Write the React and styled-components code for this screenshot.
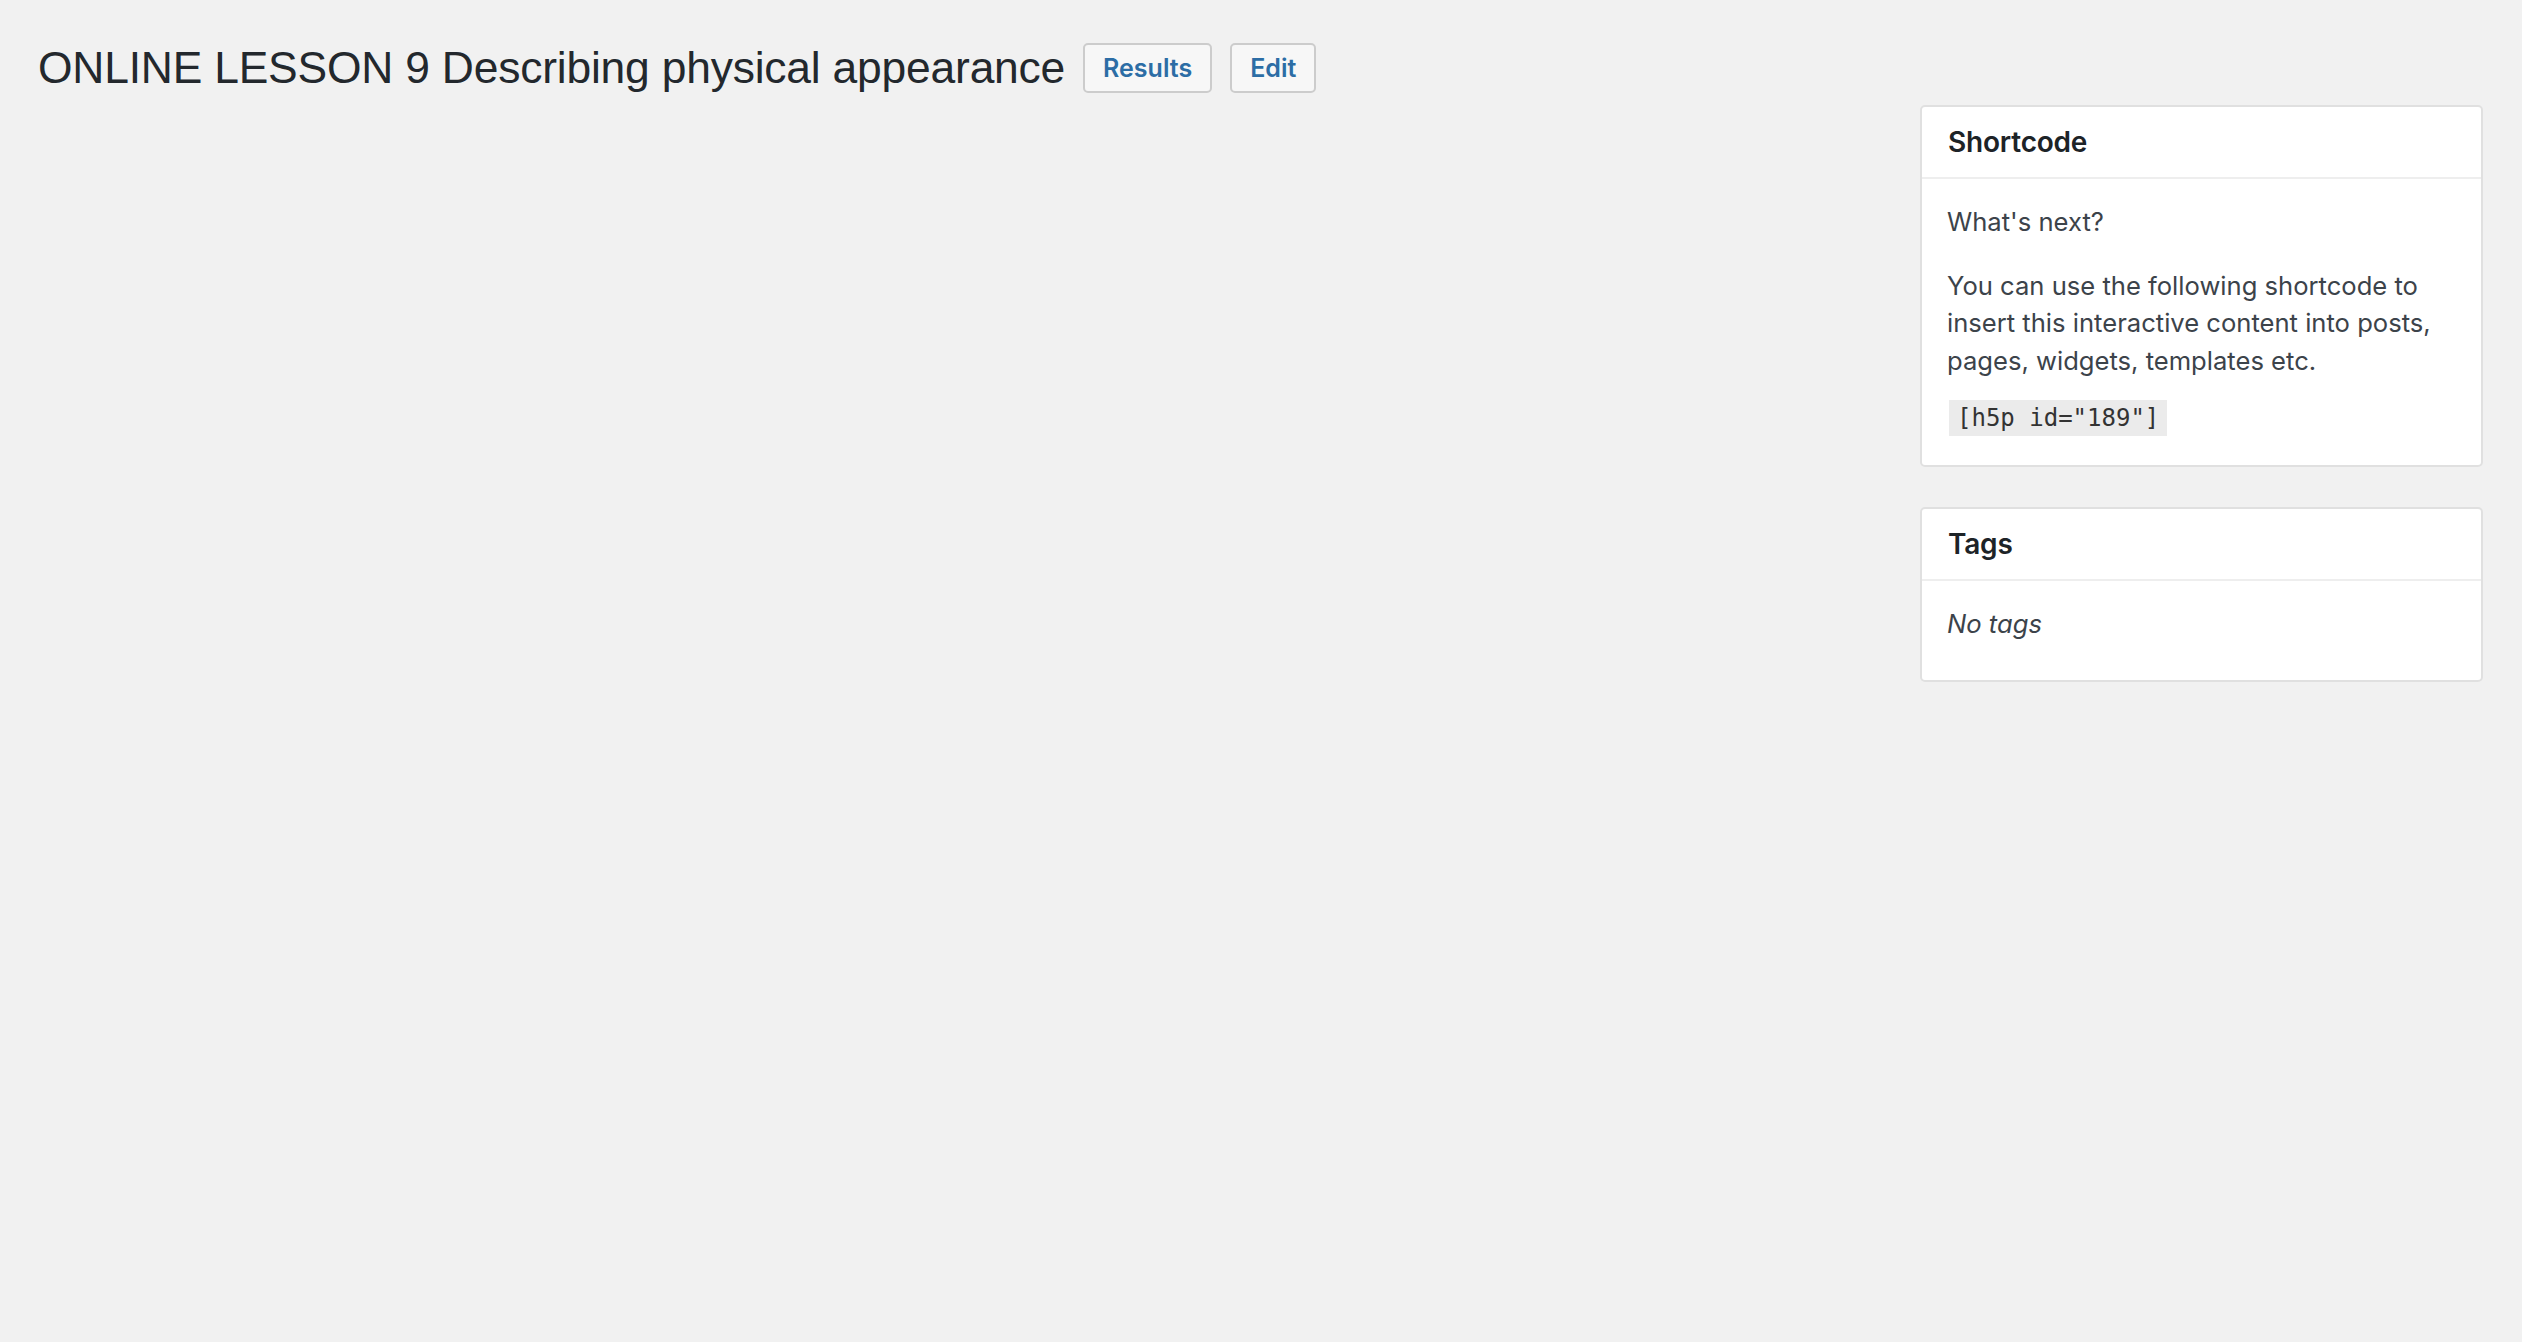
import React from 'react';
import styled, { createGlobalStyle } from 'styled-components';

const GlobalStyle = createGlobalStyle`
  html, body {
    margin: 0;
    padding: 0;
    background: #f1f1f1;
  }
  body {
    font-family: Inter, 'Liberation Sans', sans-serif;
    color: #3c434a;
    min-height: 1342px;
  }
`;

const Wrap = styled.div`
  padding: 43px 39px 0 38px;
`;

const TitleRow = styled.div`
  display: flex;
  align-items: center;
  gap: 18px;
  height: 50px;
`;

const Title = styled.h1`
  margin: 0;
  font-family: 'Liberation Sans', Arial, sans-serif;
  font-size: 44.4px;
  font-weight: 400;
  color: #23282d;
  line-height: 50px;
  letter-spacing: -0.2px;
`;

const Button = styled.a`
  display: inline-flex;
  align-items: center;
  justify-content: center;
  box-sizing: border-box;
  height: 50px;
  padding: 0 18px;
  border: 2px solid #cccccc;
  border-radius: 5px;
  background: #f7f7f7;
  color: #2c6da5;
  font-size: 25px;
  font-weight: 600;
  text-decoration: none;
`;

const Columns = styled.div`
  display: flex;
  gap: 40px;
  margin-top: 12px;
`;

const Main = styled.div`
  flex: 1;
`;

const Sidebar = styled.aside`
  width: 563px;
  display: flex;
  flex-direction: column;
  gap: 40px;
`;

const Box = styled.section`
  background: #fff;
  border: 2px solid #e0e0e0;
  border-radius: 5px;
`;

const BoxHeader = styled.h2`
  margin: 0;
  height: 70px;
  display: flex;
  align-items: center;
  padding: 0 26px;
  border-bottom: 2px solid #eeeeee;
  font-size: 28px;
  font-weight: 600;
  color: #1d2327;
  letter-spacing: -0.2px;
`;

const BoxBody = styled.div`
  padding: ${(p) => p.$pad || '24px 25px 29px'};
  font-size: 25.6px;
  line-height: 37.5px;
  color: #3c434a;
`;

const Para = styled.p`
  margin: 0 0 ${(p) => p.$gap || 0}px;
  font-style: ${(p) => (p.$italic ? 'italic' : 'normal')};
`;

const Code = styled.code`
  display: inline-block;
  margin-top: 21px;
  margin-left: 2px;
  padding: 0 8px;
  height: 36px;
  line-height: 36px;
  background: #ebebeb;
  font-family: 'DejaVu Sans Mono', monospace;
  font-size: 24px;
  color: #333;
`;

export default function App() {
  return (
    <>
      <GlobalStyle />
      <Wrap>
        <TitleRow>
          <Title>ONLINE LESSON 9 Describing physical appearance</Title>
          <Button href="#">Results</Button>
          <Button href="#">Edit</Button>
        </TitleRow>
        <Columns>
          <Main />
          <Sidebar>
            <Box>
              <BoxHeader>Shortcode</BoxHeader>
              <BoxBody>
                <Para $gap={26}>What's next?</Para>
                <Para>
                  You can use the following shortcode to insert this interactive
                  content into posts, pages, widgets, templates etc.
                </Para>
                <Code>[h5p id="189"]</Code>
              </BoxBody>
            </Box>
            <Box>
              <BoxHeader>Tags</BoxHeader>
              <BoxBody $pad="24px 25px 37px">
                <Para $italic>No tags</Para>
              </BoxBody>
            </Box>
          </Sidebar>
        </Columns>
      </Wrap>
    </>
  );
}
